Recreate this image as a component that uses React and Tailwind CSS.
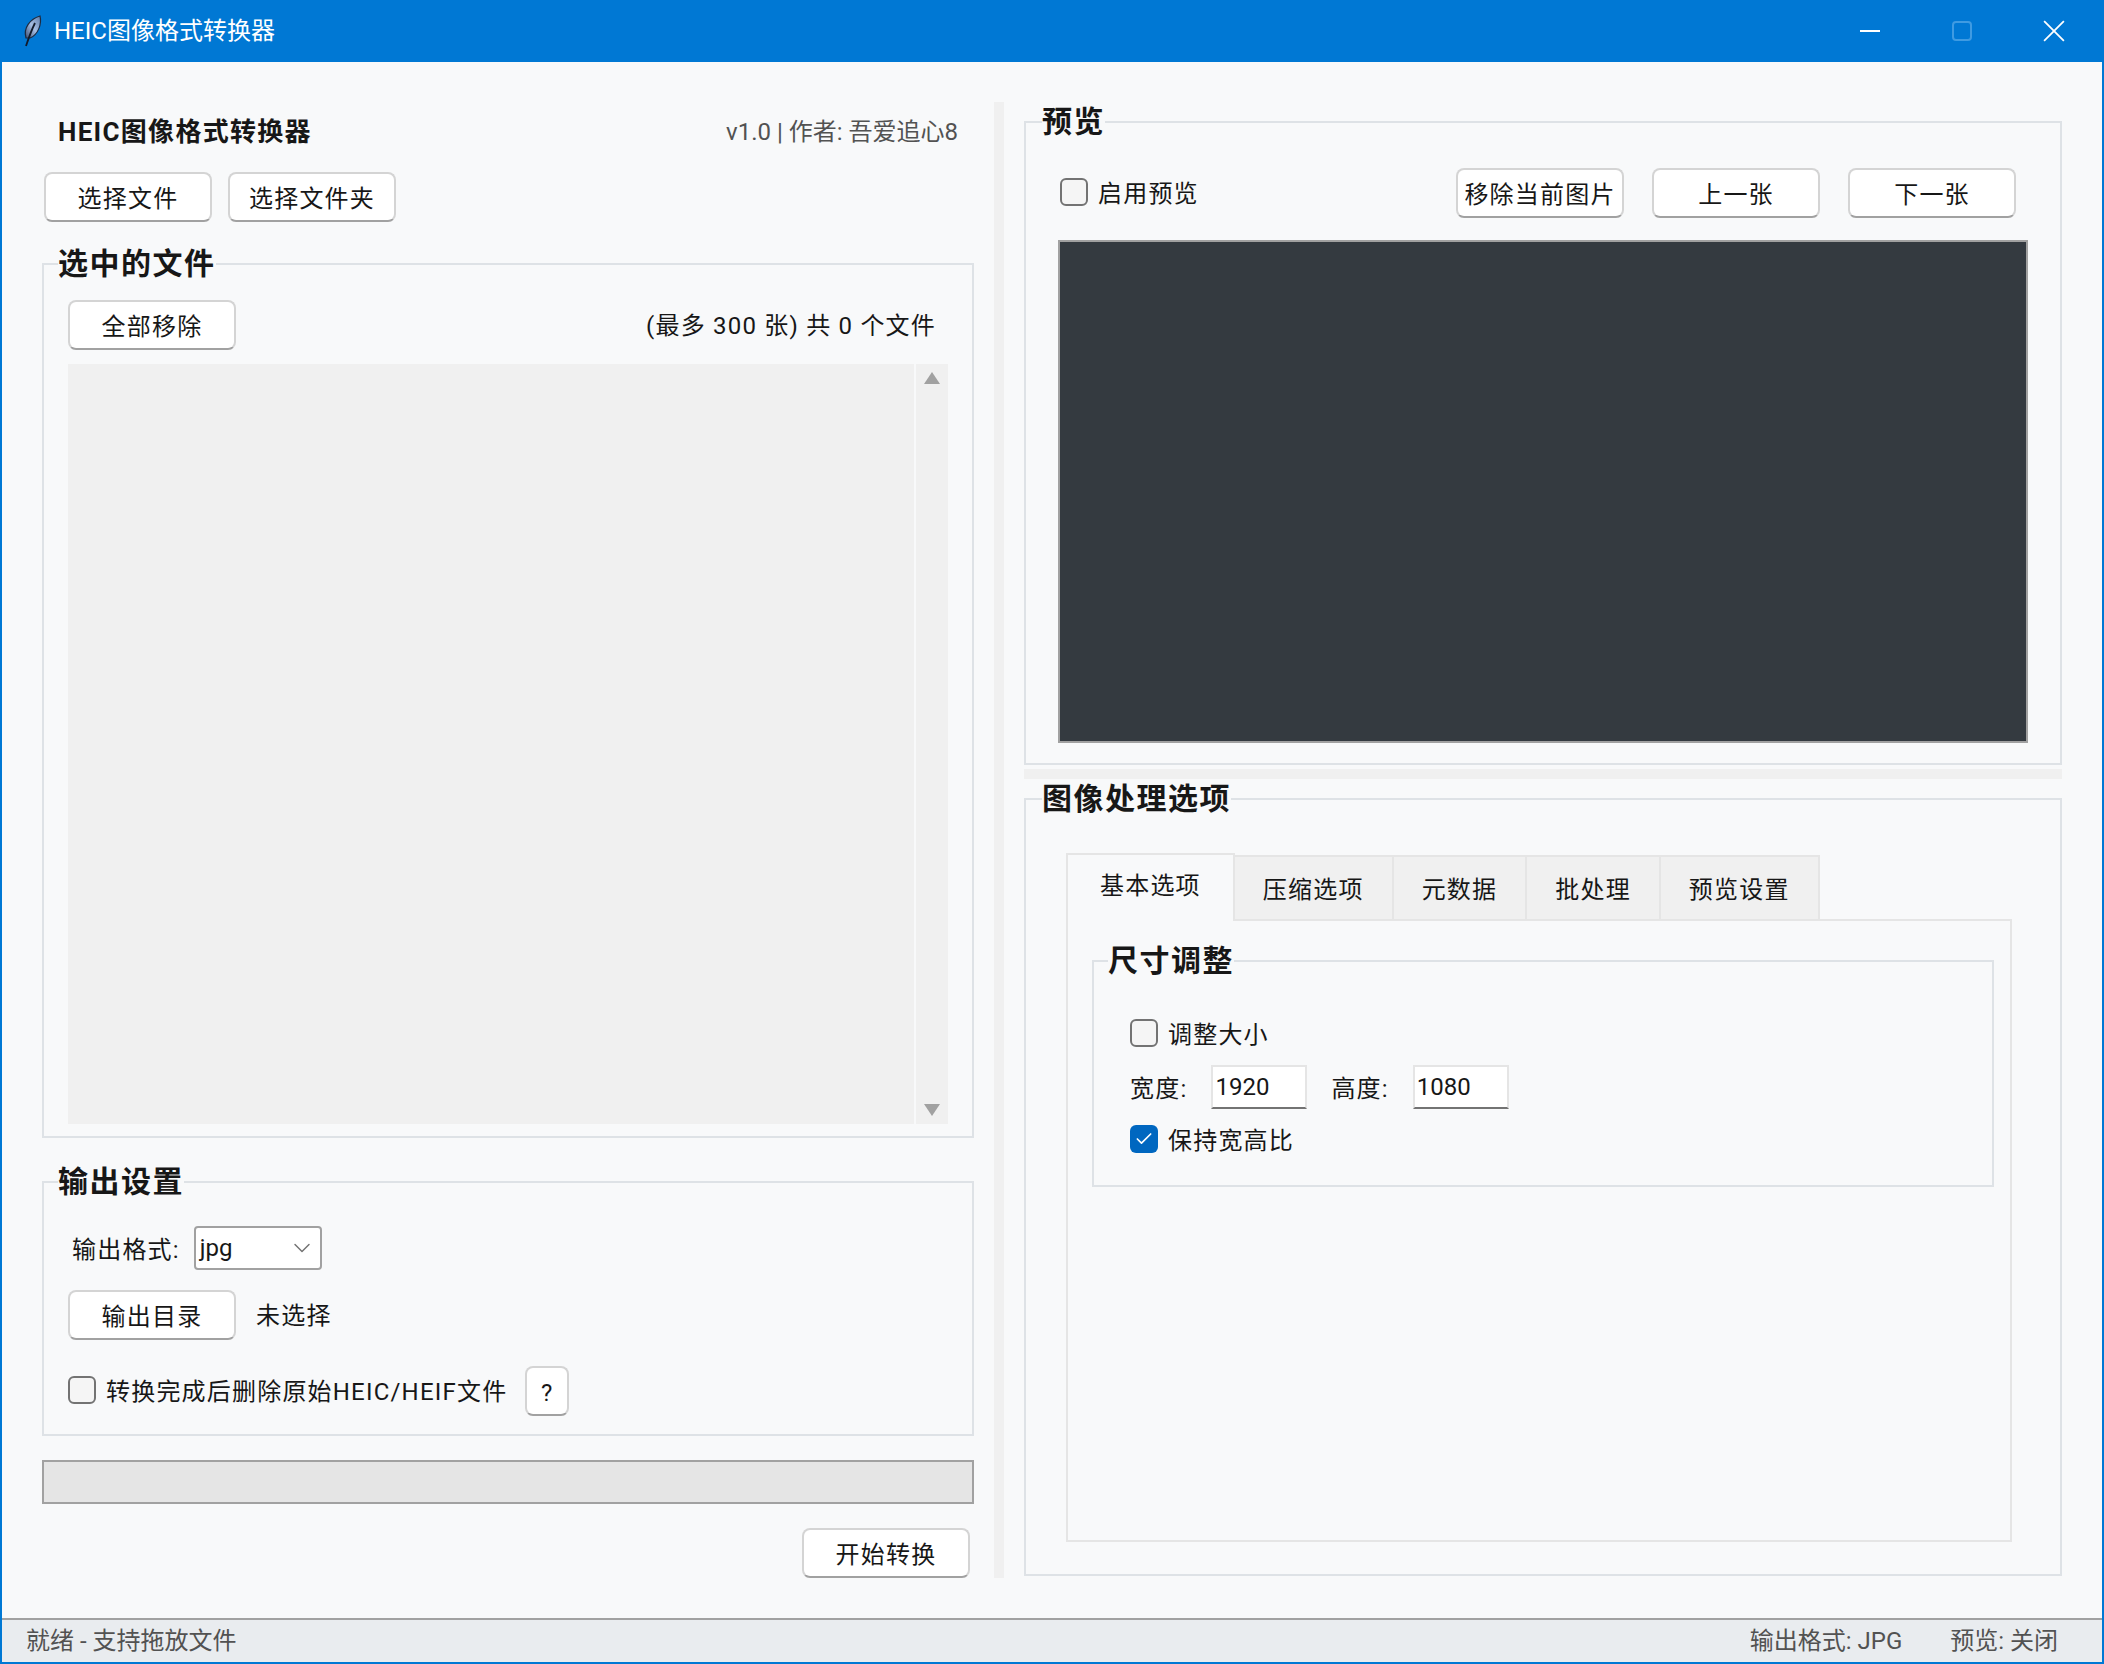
import React from "react";
import { ChevronDown, Check } from "lucide-react";

const Btn = ({ children, className = "" }) => (
  <button className={`h-12.5 -mb-0.5 pt-1 flex items-center justify-center bg-white border-2 border-neutral-300 border-b-neutral-400 rounded-lg text-2xl tracking-wider text-neutral-900 ${className}`}>
    {children}
  </button>
);

const Label = ({ children, className = "" }) => (
  <span className={`pt-1 text-2xl tracking-wider text-neutral-900 ${className}`}>{children}</span>
);

const CheckBox = ({ checked }) =>
  checked ? (
    <span className="size-7 shrink-0 rounded-md bg-[#0067c0] flex items-center justify-center">
      <Check className="size-5 text-white" strokeWidth={2} />
    </span>
  ) : (
    <span className="size-7 shrink-0 rounded-md border-2 border-neutral-500 bg-neutral-100" />
  );

const Group = ({ title, className = "", bodyClass = "", legendClass = "ml-3.5", children }) => (
  <fieldset className={`flex flex-col border-2 border-[#dee2e6] ${className}`}>
    <legend className={`text-3xl leading-8 font-bold tracking-wider text-neutral-900 ${legendClass}`}>{title}</legend>
    <div className={`flex flex-col flex-1 min-h-0 ${bodyClass}`}>{children}</div>
  </fieldset>
);

const Feather = () => (
  <svg viewBox="0 0 20 32" className="w-6 h-8">
    <defs>
      <linearGradient id="quill" x1="0" y1="1" x2="1" y2="0">
        <stop offset="0" stopColor="#3c4f73" />
        <stop offset="0.5" stopColor="#a5bde2" />
        <stop offset="1" stopColor="#5f7daa" />
      </linearGradient>
    </defs>
    <path d="M4 23C1 13 8 4 18 1c2 8-2 19-10 22z" fill="url(#quill)" stroke="#1d2a40" strokeWidth="1.2" />
    <path d="M13 8C10 14 7 22 4 31" fill="none" stroke="#111a2b" strokeWidth="1.8" />
  </svg>
);

const Tab = ({ children }) => (
  <div className="h-16 px-7 pt-1 flex items-center bg-[#f0f0f0] border-2 border-b-0 border-l-0 border-neutral-200 text-2xl tracking-wider text-neutral-900">
    {children}
  </div>
);

export default function App() {
  return (
    <div className="h-screen flex flex-col bg-[#f8f9fa] font-['Roboto','Noto_Sans_CJK_SC',sans-serif] border-2 border-t-0 border-[#0078d4] overflow-hidden">
      {/* title bar */}
      <div className="h-[62px] -mx-0.5 shrink-0 bg-[#0078d4] flex items-center justify-between pl-5 pr-1 text-white">
        <div className="flex items-center gap-2.5">
          <Feather />
          <span className="text-2xl">HEIC图像格式转换器</span>
        </div>
        <div className="flex h-full">
          <div className="w-23 flex items-center justify-center">
            <span className="w-5 h-0.5 bg-white" />
          </div>
          <div className="w-23 flex items-center justify-center">
            <span className="size-5 border-2 border-[#3f9be2] rounded-sm" />
          </div>
          <div className="w-23 flex items-center justify-center">
            <svg viewBox="0 0 20 20" className="size-5.5" stroke="white" strokeWidth="1.6">
              <line x1="1" y1="1" x2="19" y2="19" />
              <line x1="19" y1="1" x2="1" y2="19" />
            </svg>
          </div>
        </div>
      </div>

      <div className="flex-1 min-h-0 flex gap-5 px-10 py-10">
        {/* left column */}
        <div className="w-[932px] flex flex-col">
          <div className="mt-2 h-12 pb-1 flex items-center justify-between px-4">
            <span className="text-[26px] font-bold tracking-wider text-neutral-900">HEIC图像格式转换器</span>
            <span className="text-2xl text-neutral-600">v1.0 | 作者: 吾爱追心8</span>
          </div>
          <div className="mt-3.5 ml-0.5 flex gap-4">
            <Btn className="w-42">选择文件</Btn>
            <Btn className="w-42">选择文件夹</Btn>
          </div>

          <Group title="选中的文件" className="mt-7 flex-1 min-h-0" bodyClass="pl-6 pr-6 pt-5 pb-3">
            <div className="flex items-center justify-between pr-3">
              <Btn className="w-42">全部移除</Btn>
              <Label className="text-neutral-800">(最多 300 张) 共 0 个文件</Label>
            </div>
            <div className="mt-4 flex-1 min-h-0 flex gap-0.5">
              <div className="flex-1 bg-[#f0f0f0]" />
              <div className="w-8 bg-[#f0f0f0] flex flex-col items-center justify-between py-2">
                <svg viewBox="0 0 16 12" className="w-4 h-3 fill-neutral-400"><polygon points="8,0 16,12 0,12" /></svg>
                <svg viewBox="0 0 16 12" className="w-4 h-3 fill-neutral-400"><polygon points="0,0 16,0 8,12" /></svg>
              </div>
            </div>
          </Group>

          <Group title="输出设置" className="mt-7" bodyClass="px-5 pt-7 pb-5">
            <div className="h-11 flex items-center gap-3.5 pl-2">
              <Label>输出格式:</Label>
              <div className="w-32 h-11 bg-white border-2 border-neutral-400 rounded-sm flex items-center justify-between pl-1 pr-1">
                <span className="text-2xl text-neutral-900">jpg</span>
                <ChevronDown className="size-7 text-neutral-500" strokeWidth={1.25} />
              </div>
            </div>
            <div className="mt-5 pl-1 flex items-center gap-5">
              <Btn className="w-42">输出目录</Btn>
              <Label>未选择</Label>
            </div>
            <div className="mt-7 pl-1 flex items-center gap-2.5">
              <CheckBox />
              <Label>转换完成后删除原始HEIC/HEIF文件</Label>
              <Btn className="w-11 ml-2">?</Btn>
            </div>
          </Group>

          <div className="mt-6 h-11 shrink-0 bg-neutral-200 border-2 border-neutral-400" />
          <div className="mt-6 mb-0.5 flex justify-end pr-1">
            <Btn className="w-42">开始转换</Btn>
          </div>
        </div>

        {/* sash */}
        <div className="w-2.5 shrink-0 bg-[#f0f0f0]" />

        {/* right column */}
        <div className="flex-1 min-w-0 flex flex-col">
          <Group title="预览" className="mt-1" legendClass="ml-4" bodyClass="pt-7.5 pb-5 px-8">
            <div className="flex items-center">
              <div className="ml-0.5" />
              <CheckBox />
              <Label className="ml-2.5">启用预览</Label>
              <div className="ml-auto flex gap-7 mr-3">
                <Btn className="w-42">移除当前图片</Btn>
                <Btn className="w-42">上一张</Btn>
                <Btn className="w-42">下一张</Btn>
              </div>
            </div>
            <div className="mt-6 h-[503px] bg-[#343a40] border-2 border-neutral-400" />
          </Group>

          <div className="mt-1 h-2.5 shrink-0 bg-[#f0f0f0]" />

          <Group title="图像处理选项" className="mt-1 flex-1 min-h-0 mb-0.5" legendClass="ml-4" bodyClass="pt-10 pb-8 pl-10 pr-12">
            <div className="flex items-end">
              <div className="relative z-10 -mt-0.5 -mb-0.5 h-17 flex items-center px-8 pb-1 bg-[#f8f9fa] border-2 border-b-0 border-neutral-200 text-2xl tracking-wider text-neutral-900">
                基本选项
              </div>
              <Tab>压缩选项</Tab>
              <Tab>元数据</Tab>
              <Tab>批处理</Tab>
              <Tab>预览设置</Tab>
            </div>
            <div className="flex-1 min-h-0 border-2 border-neutral-200 pl-6 pr-4 pt-6">
              <Group title="尺寸调整" legendClass="ml-3.5" bodyClass="pl-9 pt-10 pb-7">
                <div className="h-8 flex items-center gap-2.5">
                  <CheckBox />
                  <Label>调整大小</Label>
                </div>
                <div className="mt-4 h-11 flex items-center gap-6 text-2xl text-neutral-900">
                  <Label>宽度:</Label>
                  <input readOnly value="1920" className="w-24 h-11 pl-0.5 bg-white border-2 border-neutral-200 border-b-neutral-500 outline-none" />
                  <Label>高度:</Label>
                  <input readOnly value="1080" className="w-24 h-11 pl-0.5 bg-white border-2 border-neutral-200 border-b-neutral-500 outline-none" />
                </div>
                <div className="mt-3 h-9 flex items-center gap-2.5">
                  <CheckBox checked />
                  <Label>保持宽高比</Label>
                </div>
              </Group>
            </div>
          </Group>
        </div>
      </div>

      {/* status bar */}
      <div className="h-11 shrink-0 flex items-center justify-between pl-6 pr-11 bg-[#e9ecef] border-t-2 border-neutral-400 text-2xl text-neutral-600">
        <span>就绪 - 支持拖放文件</span>
        <div className="flex gap-12">
          <span>输出格式: JPG</span>
          <span>预览: 关闭</span>
        </div>
      </div>
    </div>
  );
}
